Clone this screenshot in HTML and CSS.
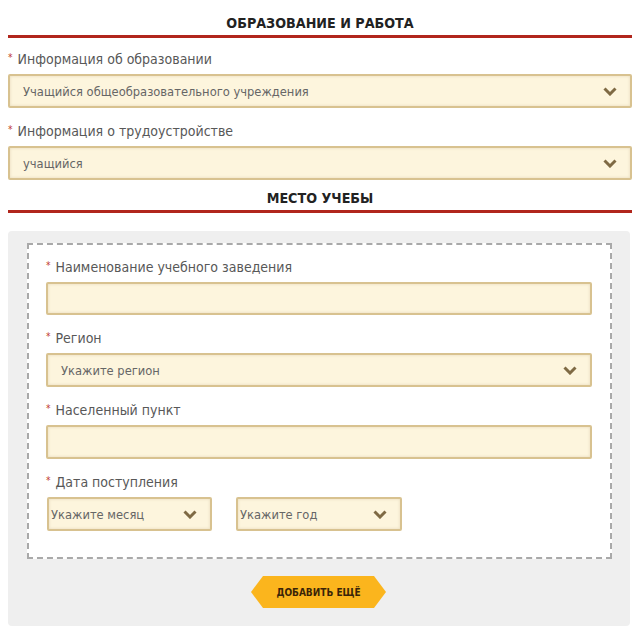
FILE: index.html
```html
<!DOCTYPE html>
<html lang="ru">
<head>
<meta charset="utf-8">
<title>Образование и работа</title>
<link rel="stylesheet" href="styles.css">
</head>
<body>
<div class="page">
  <h2 class="section-title">ОБРАЗОВАНИЕ И РАБОТА</h2>

  <div class="field first">
    <div class="label"><span class="req">*</span> Информация об образовании</div>
    <div class="select">
      <span class="value">Учащийся общеобразовательного учреждения</span>
      <svg class="chev" viewBox="0 0 14 9" width="14" height="9"><path d="M1.5 1.5 L7 7 L12.5 1.5" fill="none" stroke="currentColor" stroke-width="3"/></svg>
    </div>
  </div>

  <div class="field">
    <div class="label"><span class="req">*</span> Информация о трудоустройстве</div>
    <div class="select">
      <span class="value">учащийся</span>
      <svg class="chev" viewBox="0 0 14 9" width="14" height="9"><path d="M1.5 1.5 L7 7 L12.5 1.5" fill="none" stroke="currentColor" stroke-width="3"/></svg>
    </div>
  </div>

  <h2 class="section-title">МЕСТО УЧЕБЫ</h2>

  <div class="panel">
    <div class="dashed">
      <div class="field inner-first">
        <div class="label"><span class="req">*</span> Наименование учебного заведения</div>
        <div class="input short"></div>
      </div>
      <div class="field">
        <div class="label"><span class="req">*</span> Регион</div>
        <div class="select inner">
          <span class="value">Укажите регион</span>
          <svg class="chev" viewBox="0 0 14 9" width="14" height="9"><path d="M1.5 1.5 L7 7 L12.5 1.5" fill="none" stroke="currentColor" stroke-width="3"/></svg>
        </div>
      </div>
      <div class="field">
        <div class="label"><span class="req">*</span> Населенный пункт</div>
        <div class="input"></div>
      </div>
      <div class="field">
        <div class="label"><span class="req">*</span> Дата поступления</div>
        <div class="date-row">
          <div class="select small month">
            <span class="value">Укажите месяц</span>
            <svg class="chev" viewBox="0 0 14 9" width="14" height="9"><path d="M1.5 1.5 L7 7 L12.5 1.5" fill="none" stroke="currentColor" stroke-width="3"/></svg>
          </div>
          <div class="select small year">
            <span class="value">Укажите год</span>
            <svg class="chev" viewBox="0 0 14 9" width="14" height="9"><path d="M1.5 1.5 L7 7 L12.5 1.5" fill="none" stroke="currentColor" stroke-width="3"/></svg>
          </div>
        </div>
      </div>
    </div>
    <div class="btn-row">
      <button class="add-btn">ДОБАВИТЬ ЕЩЁ</button>
    </div>
  </div>
</div>
</body>
</html>
```

FILE: styles.css
```css
* { box-sizing: border-box; }

html, body {
  margin: 0;
  background: #ffffff;
}

body {
  font-family: "DejaVu Sans Condensed", "DejaVu Sans", sans-serif;
  font-stretch: condensed;
  color: #555;
}

.page {
  padding: 5px 10px 0 8px;
}

.section-title {
  margin: 0;
  padding: 8px 0 2px;
  font-size: 14.2px;
  line-height: 20px;
  font-weight: bold;
  color: #222;
  text-align: center;
  border-bottom: 3px solid #b1261c;
}

.field {
  margin-top: 14px;
}

.field.first {
  margin-top: 12px;
}

.field.inner-first {
  margin-top: 0;
}

.label {
  font-size: 14px;
  line-height: 16px;
  height: 16px;
  margin-bottom: 8px;
  color: #585858;
  white-space: nowrap;
}

.req {
  color: #c0392b;
  font-size: 10px;
  vertical-align: 3px;
  margin-right: 1px;
}

.select,
.input {
  height: 34px;
  background: #fdf5dd;
  border: 2px solid #d8c290;
  border-radius: 2px;
  box-shadow: inset 0 0 3px rgba(160, 130, 70, 0.25);
}

.input.short {
  height: 33px;
}

.select {
  display: flex;
  align-items: center;
  justify-content: space-between;
  padding: 0 13px 0 13px;
}

.select .value {
  font-size: 12.8px;
  color: #666;
  white-space: nowrap;
}

.chev {
  color: #7f6a44;
  flex: none;
}

.panel {
  margin-top: 18px;
  margin-right: 2px;
  background: #efefef;
  border-radius: 4px;
  padding: 12px 18px 18px 19px;
}

.dashed {
  background: #fff;
  border: 2px dashed #a9a9a9;
  padding: 13px 18px 26px 17px;
}

.date-row {
  display: flex;
  gap: 24px;
  padding-left: 1px;
}

.select.small {
  height: 34px;
  padding: 0 13px 0 2px;
}

.select.month {
  width: 165px;
}

.select.year {
  width: 166px;
}

.btn-row {
  display: flex;
  justify-content: center;
  margin-top: 17px;
  padding-right: 2px;
}

.add-btn {
  width: 135px;
  height: 32px;
  border: none;
  background: #fbb51d;
  color: #3a2408;
  font-family: inherit;
  font-stretch: condensed;
  font-weight: bold;
  font-size: 10px;
  clip-path: polygon(12px 0, calc(100% - 12px) 0, 100% 50%, calc(100% - 12px) 100%, 12px 100%, 0 50%);
  cursor: pointer;
}
```
